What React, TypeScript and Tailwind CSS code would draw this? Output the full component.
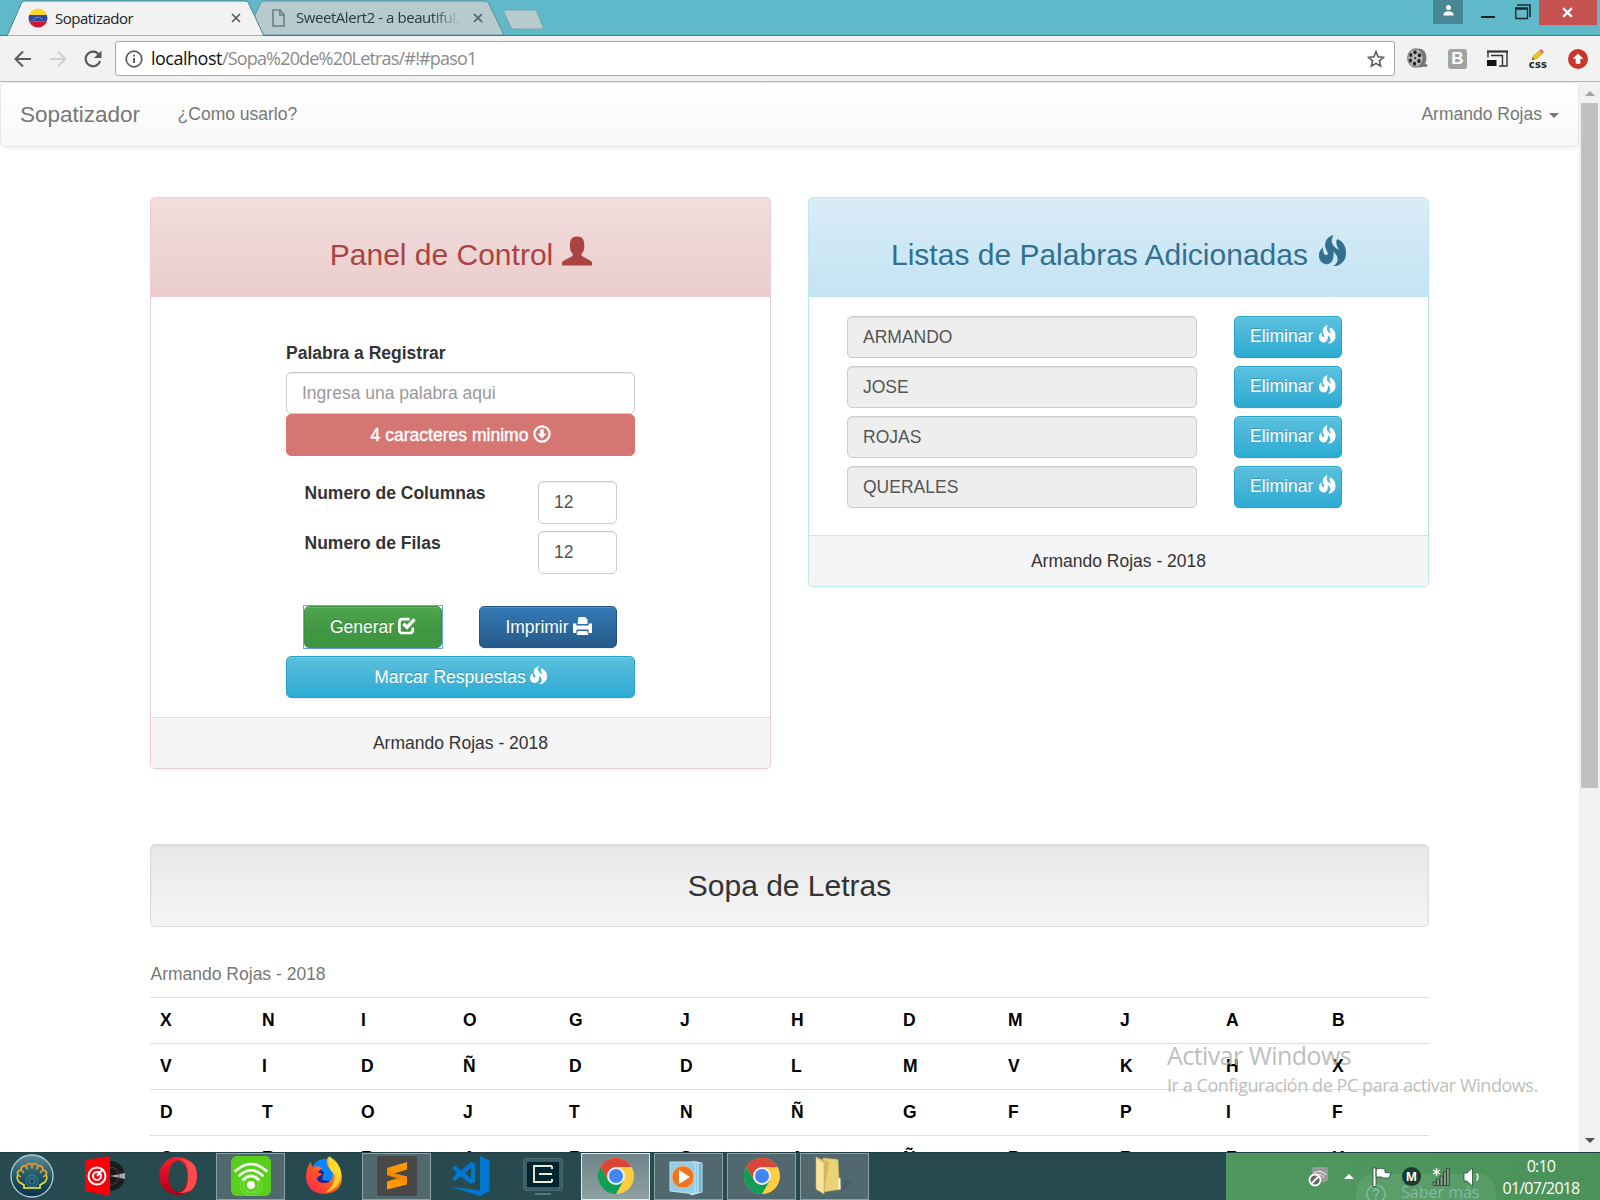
import React from "react";

const uiFont = "font-['Open_Sans','Noto_Sans',sans-serif]";

/* ---------- Glyphs used by the page ---------- */

function Fire({ className = "" }: { className?: string }) {
  return (
    <svg viewBox="93 -31 1046 1202" preserveAspectRatio="none" className={className} fill="currentColor">
      <path
        transform="translate(0 1200) scale(1 -1)"
        d="M653 1231q-39 -67 -54.500 -131t-10.500 -114.500t24.500 -96.500t47.500 -80t63.500 -62.500t68.500 -46.500t65 -30q-4 7 -17.500 35t-18.500 39.500t-17 39.500t-17 43t-13 42t-9.500 44.500t-2 42t4 43t13.500 39t23 38.500q96 -42 165 -107.500t105 -138t52 -156t13 -159t-19 -149.500q-13 -55 -44 -106.500t-68 -87t-78.500 -64.500t-72.500 -45t-53 -22q-72 -22 -127 -11q-31 6 -13 19q6 3 17 7q13 5 32.500 21t41 44t38.500 63.500t21.500 81.500t-6.500 94.500t-50 107t-104 115.500q10 -104 -0.500 -189t-37 -140.500t-65 -93t-84 -52t-93.500 -11t-95 24.500q-80 36 -131.500 114t-53.500 171q-2 23 0 49.500t4.500 52.500t13.500 56t27.500 60t46 64.500t69.500 68.500q-8 -53 -5 -102.500t17.500 -90t34 -68.500t44.500 -39t49 -2q31 13 38.500 36t-4.500 55t-29 64.500t-36 75t-26 75.500q-15 85 2 161.500t53.500 128.500t85.500 92.500t93.500 61t81.500 25.500z"
      />
    </svg>
  );
}

function User({ className = "" }: { className?: string }) {
  return (
    <svg viewBox="0 0 31 30" className={className} fill="currentColor">
      <path d="M0 30V26.700Q.3 25.500 3 24.300L10.500 20.300Q11.700 19.300 10.800 17.500C9 16 8.500 14 8.300 12C7.800 4 9.500 0 15.600 0S23.500 4 23 12C22.800 14 22 16 20.500 17.500Q19.500 19.300 21 20.300L28 24.300Q31 25.700 31 27V30Z" />
    </svg>
  );
}

function CircleDown() {
  return (
    <svg viewBox="0 0 18 18" className="-mt-[3px] h-[18px] w-[18px] shrink-0">
      <circle cx="9" cy="9" r="7.600" fill="none" stroke="currentColor" strokeWidth="2.200" />
      <path d="M7.200 4.200h3.600v4.600h2.500L9 13.800 4.700 8.800h2.500Z" fill="currentColor" />
    </svg>
  );
}

function CheckBox() {
  return (
    <svg viewBox="0 0 18 18" className="-mt-[3px] h-[18px] w-[18px] shrink-0" fill="none" stroke="currentColor">
      <path d="M11.500 2.200H4.500Q1.400 2.200 1.400 5.200V13.200Q1.400 16 4.500 16H11.800Q14.800 16 14.800 13.200V10.500" strokeWidth="2.700" />
      <path d="M5.500 6.700l3.500 3.600 7.500-8" strokeWidth="3.400" />
    </svg>
  );
}

function Printer() {
  return (
    <svg viewBox="0 0 19 18" className="-mt-[3px] h-[18px] w-[19px] shrink-0" fill="currentColor">
      <path d="M5.500 0h6.500l2.500 2.500V7h-10Z" />
      <path d="M0 6.500h3.300v2h12.400v-2H19v9.500h-3.500v-3.500h-12v3.500H0Z" />
      <path d="M5 14h9l1.500 4h-12Z" />
    </svg>
  );
}

/* ---------- Browser window ---------- */

function TabShape({ width, fill, stroke }: { width: number; fill: string; stroke: string }) {
  return (
    <svg className="absolute inset-0 h-full w-full" viewBox={`0 0 ${width} 36`} preserveAspectRatio="none">
      <path d={`M0 36L14.500 3Q15.500 1 18 1H${width - 19}Q${width - 16.500} 1 ${width - 15.500} 3L${width} 36Z`} fill={fill} stroke={stroke} />
    </svg>
  );
}

function Cross({ className = "" }: { className?: string }) {
  return (
    <svg viewBox="0 0 10 10" className={className} stroke="currentColor" fill="none">
      <path d="M1 1l8 8M9 1L1 9" strokeWidth="1.600" />
    </svg>
  );
}

function TitleBar() {
  return (
    <div className={`relative flex h-9 border-b border-[#3f7f8a] bg-[#5fb9c9] text-[15px] ${uiFont}`}>
      <div className="relative z-10 -mb-px ml-[7px] flex h-9 w-[257px] items-center pr-[23px] pl-[21px]">
        <TabShape width={257} fill="#f2f2f2" stroke="#44828d" />
        <svg viewBox="0 0 20 20" className="relative h-5 w-5 shrink-0">
          <clipPath id="flag"><circle cx="10" cy="10" r="9.500" /></clipPath>
          <g clipPath="url(#flag)">
            <rect width="20" height="7" fill="#fbd52a" />
            <rect y="7" width="20" height="6.500" fill="#2b4a9b" />
            <rect y="13.500" width="20" height="7" fill="#d3122c" />
            <path d="M5 12Q10 6.500 15 12" stroke="#c9d0e8" strokeWidth="1" strokeDasharray="1 1" fill="none" />
          </g>
        </svg>
        <span className="relative ml-[7px] tracking-[-0.5px] text-[#222]">Sopatizador</span>
        <Cross className="relative ml-auto h-[10px] w-[10px] text-[#555]" />
      </div>
      <div className="relative -ml-[18px] flex h-[35px] w-[258px] items-center pr-[21px] pl-[26px]">
        <TabShape width={258} fill="#b7cbce" stroke="#5a8f98" />
        <svg viewBox="0 0 13 18" className="relative h-[18px] w-[13px] shrink-0" fill="none" stroke="#6f7f82" strokeWidth="1.600">
          <path d="M1 1h7l4 4.500V17H1ZM7.800 1v5H12" />
        </svg>
        <span className="relative ml-[11px] w-[165px] overflow-hidden tracking-[-0.45px] whitespace-nowrap text-[#2b3a3d] [mask-image:linear-gradient(to_right,black_82%,transparent)]">
          SweetAlert2 - a beautiful,
        </span>
        <Cross className="relative ml-auto h-[10px] w-[10px] text-[#4d5c5f]" />
      </div>
      <svg viewBox="0 0 43 22" className="mt-[9px] -ml-[2px] h-[22px] w-[43px]">
        <path d="M3 1H32Q34 1 34.700 2.500L41 18Q41.500 20 39 20H12Q10 20 9 18.500L2 3Q1.300 1 3 1Z" fill="#b7cbce" stroke="#7aa5ad" />
      </svg>
      <div className="ml-auto flex items-start pr-[3px]">
        <div className="flex h-6 w-[30px] justify-center bg-[#478894] pt-[5px]">
          <svg viewBox="0 0 10 11" className="h-[11px] w-[11px]" fill="#fff">
            <circle cx="5" cy="2.500" r="2.500" />
            <path d="M0 10.500V9Q1 6.300 5 6.300T10 9V10.500Z" />
          </svg>
        </div>
        <div className="mt-4 ml-[18px] h-[2px] w-[14px] bg-[#222]" />
        <svg viewBox="0 0 16 16" className="mt-1 ml-5 h-4 w-4" fill="none" stroke="#1f2a2d">
          <path d="M2 1H15V13" strokeWidth="1.600" />
          <path d="M.8 5V14.500H12.500V5" strokeWidth="1.300" />
          <path d="M0 4.500H13" strokeWidth="2.500" />
        </svg>
        <div className="ml-[8px] flex h-[25px] w-[58px] items-center justify-center bg-[#c75050] pr-[2px] text-white">
          <svg viewBox="0 0 10 10" className="h-[11px] w-[11px]"><path d="M1 1l8 8M9 1L1 9" stroke="#fff" strokeWidth="2" /></svg>
        </div>
      </div>
    </div>
  );
}

function Toolbar() {
  return (
    <div className={`flex h-[46px] items-center border-b border-[#b6b4b6] bg-[#f2f2f2] ${uiFont}`}>
      <svg viewBox="0 0 18 18" className="ml-[14px] h-[18px] w-[18px]" fill="none" stroke="#5a5a5a" strokeWidth="2">
        <path d="M17 9H2M9 1.500L1.500 9L9 16.500" />
      </svg>
      <svg viewBox="0 0 18 18" className="ml-[17px] h-[18px] w-[18px]" fill="none" stroke="#d0d0d0" strokeWidth="2">
        <path d="M1 9H16M9 1.500L16.500 9L9 16.500" />
      </svg>
      <svg viewBox="0 0 18 18" className="ml-[17px] h-[18px] w-[18px]" fill="none" stroke="#5a5a5a" strokeWidth="2.200">
        <path d="M15 4.800A7.300 7.300 0 1 0 16 11" />
        <path d="M17.500 .5V8H10Z" fill="#5a5a5a" stroke="none" />
      </svg>
      <div className="ml-[13px] flex h-[35px] w-[1280px] items-center rounded-[3px] border border-[#a9a9a9] bg-white pr-[9px] pl-[9px]">
        <svg viewBox="0 0 18 18" className="h-[18px] w-[18px]" fill="none" stroke="#5a5a5a">
          <circle cx="9" cy="9" r="7.800" strokeWidth="1.700" />
          <path d="M9 8v5M9 4.800v1.800" strokeWidth="1.900" />
        </svg>
        <span className="ml-[8px] text-[18px] tracking-[-0.82px] whitespace-nowrap text-[#8a8a8a]">
          <span className="tracking-[-0.5px] text-[#111]">localhost</span>/Sopa%20de%20Letras/#!#paso1
        </span>
        <svg viewBox="0 0 18 18" className="ml-auto h-[18px] w-[18px]" fill="none" stroke="#5a5a5a" strokeWidth="1.600">
          <path d="M9 1.800l2.100 5 5.400.5-4.100 3.600 1.200 5.300L9 13.400l-4.600 2.800 1.200-5.300L1.500 7.300l5.400-.5Z" />
        </svg>
      </div>
      <svg viewBox="0 0 21 21" className="ml-[12px] h-[21px] w-[21px]">
        <ellipse cx="12.500" cy="10" rx="7" ry="9.500" fill="#777" />
        <ellipse cx="8.500" cy="10" rx="7.800" ry="9.300" fill="#b5b5b5" stroke="#555" strokeWidth=".8" />
        <g fill="#222">
          <ellipse cx="8" cy="4.200" rx="1.700" ry="2" /><ellipse cx="12.500" cy="7.200" rx="1.700" ry="2" />
          <ellipse cx="12" cy="13" rx="1.700" ry="2" /><ellipse cx="7.500" cy="15.700" rx="1.700" ry="2" />
          <ellipse cx="3.500" cy="12.500" rx="1.500" ry="2" /><ellipse cx="3.800" cy="7" rx="1.500" ry="2" />
          <circle cx="8.200" cy="10" r="1" />
        </g>
        <path d="M12 18.500Q17 15 20.500 16.500L20 19Z" fill="#777" />
      </svg>
      <div className="ml-[20px] flex h-5 w-[19px] items-center justify-center rounded-[3px] bg-[#a3a3a3] font-['Liberation_Sans',sans-serif] text-[17px] leading-none font-bold text-white">B</div>
      <svg viewBox="0 0 21 17" className="ml-[20px] h-[17px] w-[21px]" fill="none" stroke="#333">
        <path d="M0 1.500H21" strokeWidth="2.200" />
        <path d="M1 2v5.500M20 2v14H12M4 5.500h11.500V16" strokeWidth="1.400" />
        <path d="M0 10h9.500v6H0Z" fill="#111" stroke="none" />
      </svg>
      <div className="ml-[20px] flex w-5 flex-col items-center">
        <svg viewBox="0 0 12 11" className="h-[11px] w-[12px]">
          <path d="M0 11l1.200-4L7.500 1.500l3 3L4 10Z" fill="#f3c51c" stroke="#a37b00" strokeWidth=".5" />
          <path d="M7.500 1.500L9 0l3 2.800-1.500 1.700Z" fill="#e8657c" />
          <path d="M0 11l.7-2.200L2 10.300Z" fill="#222" />
        </svg>
        <span className="font-['DejaVu_Sans',sans-serif] text-[10px] leading-[9px] font-bold tracking-[0.2px] text-[#222]">css</span>
      </div>
      <svg viewBox="0 0 20 20" className="ml-[20px] h-5 w-5">
        <circle cx="10" cy="10" r="10" fill="#c9372c" />
        <path d="M10 4.500l5.300 5.300h-3v5H7.700v-5h-3Z" fill="#fff" />
      </svg>
    </div>
  );
}

/* ---------- Page ---------- */

function Navbar() {
  return (
    <nav className="flex h-[65px] items-center rounded-[5px] border border-[#e7e7e7] bg-linear-to-b from-white to-[#f8f8f8] pr-[19px] pl-[19px] text-[#777] shadow-[0_1px_6px_rgba(0,0,0,0.075)]">
      <span className="-mt-px text-[22.5px]">Sopatizador</span>
      <span className="ml-[37.500px]">¿Como usarlo?</span>
      <span className="ml-auto">Armando Rojas</span>
      <span className="mt-[2px] ml-[7px] h-0 w-0 border-x-5 border-t-5 border-x-transparent border-t-[#777]" />
    </nav>
  );
}

const buttonBase =
  "flex h-[42px] items-center justify-center gap-[4px] rounded-[5px] border text-white shadow-[inset_0_1px_0_rgba(255,255,255,0.15),0_1px_1px_rgba(0,0,0,0.075)] [text-shadow:0_-1px_0_rgba(0,0,0,0.2)]";
const infoButton = "border-[#28a4c9] bg-linear-to-b from-[#5bc0de] to-[#2aabd2]";
const inputBase = "rounded-[5px] border border-[#ccc] px-[15px] shadow-[inset_0_1px_1px_rgba(0,0,0,0.075)] outline-none";

function NumberRow({ label }: { label: string }) {
  return (
    <div className="flex h-[50px] items-start justify-between pr-[18px] pl-[18.500px]">
      <label className="font-bold">{label}</label>
      <input className={`${inputBase} h-[43px] w-[79px] text-[#555]`} defaultValue="12" />
    </div>
  );
}

function ControlPanel() {
  return (
    <section className="w-[621px] overflow-hidden rounded-[5px] border border-[#ebccd1] shadow-[0_1px_2px_rgba(0,0,0,0.05)]">
      <h3 className="flex h-[99px] items-center justify-center gap-[9px] bg-linear-to-b from-[#f2dede] to-[#ebcccc] pt-[14px] pl-px text-[30px] leading-none text-[#a94442]">
        Panel de Control
        <User className="-mt-[8px] h-[30px] w-[30px]" />
      </h3>
      <div className="mx-auto flex h-[420px] w-[349px] flex-col pt-[44px]">
        <label className="mb-[6px] font-bold">Palabra a Registrar</label>
        <input className={`${inputBase} h-[42px] shrink-0 placeholder:text-[#999]`} placeholder="Ingresa una palabra aqui" />
        <div className="flex h-[42px] shrink-0 items-center justify-center gap-[5px] rounded-[5px] border border-[#dd7572] bg-[#d67673] pl-px tracking-[0.02px] text-white [-webkit-text-stroke:0.4px_white]">
          4 caracteres minimo
          <CircleDown />
        </div>
        <div className="mt-[25px]">
          <NumberRow label="Numero de Columnas" />
          <NumberRow label="Numero de Filas" />
        </div>
        <div className="mt-[25px] flex justify-between px-[18px]">
          <div className="-m-px border border-[#6ea6f0]">
            <button className={`${buttonBase} w-[138px] border-[#3e8f3e] bg-linear-to-b from-[#4ea64e] to-[#419641] to-60%`}>
              Generar <CheckBox />
            </button>
          </div>
          <button className={`${buttonBase} w-[138px] border-[#245580] bg-linear-to-b from-[#337ab7] to-[#265a88] pl-px`}>
            Imprimir <Printer />
          </button>
        </div>
        <button className={`${buttonBase} ${infoButton} mt-2`}>
          Marcar Respuestas <Fire className="-mt-[4px] h-[18px] w-[17px]" />
        </button>
      </div>
      <footer className="flex h-[51px] items-center justify-center border-t border-[#ddd] bg-[#f5f5f5]">Armando Rojas - 2018</footer>
    </section>
  );
}

const words = ["ARMANDO", "JOSE", "ROJAS", "QUERALES"];

function WordsPanel() {
  return (
    <section className="w-[621px] self-start overflow-hidden rounded-[5px] border border-[#bce8f1] shadow-[0_1px_2px_rgba(0,0,0,0.05)]">
      <h3 className="flex h-[99px] items-center justify-center gap-[11px] bg-linear-to-b from-[#d9edf7] to-[#c4e3f3] pt-[14px] text-[30px] leading-none text-[#31708f]">
        Listas de Palabras Adicionadas
        <Fire className="-mt-[9px] h-[31px] w-[27px]" />
      </h3>
      <div className="flex h-[238px] flex-col gap-2 pt-[19px] pl-[38px]">
        {words.map((word) => (
          <div key={word} className="flex">
            <input className={`${inputBase} h-[42px] w-[350px] bg-[#eee] text-[#555]`} defaultValue={word} readOnly />
            <button className={`${buttonBase} ${infoButton} ml-[37px] w-[108px] !justify-start !gap-[5px] pb-[2px] pl-[15px]`}>
              Eliminar <Fire className="-mt-[3px] ml-px h-[18.500px] w-[16.500px] shrink-0" />
            </button>
          </div>
        ))}
      </div>
      <footer className="flex h-[51px] items-center justify-center border-t border-[#ddd] bg-[#f5f5f5]">Armando Rojas - 2018</footer>
    </section>
  );
}

const rows = ["XNIOGJHDMJAB", "VIDÑDDLMVKHX", "DTOJTNÑGFPIF", "CRRARSAÑPRFK"];

function LetterGrid() {
  return (
    <div className="mt-[35px]">
      <p className="pb-[10px] pl-[0.500px] text-[#777]">Armando Rojas - 2018</p>
      {rows.map((row) => (
        <div
          key={row}
          className="grid h-[46px] grid-cols-[102px_99px_102px_106px_111px_111px_112px_105px_112px_106px_106px_107px] items-start border-t border-[#ddd] pt-[10px] font-bold text-black"
        >
          {row.split("").map((letter, i) => (
            <span key={i} className="pl-[10px]">{letter}</span>
          ))}
        </div>
      ))}
    </div>
  );
}

function Scrollbar() {
  return (
    <div className="flex w-[21px] flex-col items-center bg-[#f1f1f1] pt-[9px] pb-[9px]">
      <span className="border-x-5 border-b-5 border-x-transparent border-b-[#a3a3a3]" />
      <span className="mt-[7px] h-[685px] w-[17px] bg-[#c1c1c1]" />
      <span className="mt-auto border-x-5 border-t-5 border-x-transparent border-t-[#505050]" />
    </div>
  );
}

function Page() {
  return (
    <div className="flex h-[1070px] overflow-hidden font-['Liberation_Sans',Arial,sans-serif] text-[17.5px] leading-[25px] text-[#333]">
      <main className="w-[1579px] overflow-hidden bg-white">
        <Navbar />
        <div className="w-[1429px] pl-[150px]">
          <div className="mt-[50px] flex justify-between">
            <ControlPanel />
            <WordsPanel />
          </div>
          <div className="mt-[75px] flex h-[83px] items-center justify-center rounded-[5px] border border-[#dcdcdc] bg-linear-to-b from-[#e8e8e8] to-[#f5f5f5] text-[30px] leading-none shadow-[inset_0_1px_3px_rgba(0,0,0,0.05),0_1px_0_rgba(255,255,255,0.1)]">
            Sopa de Letras
          </div>
          <LetterGrid />
        </div>
      </main>
      <Scrollbar />
    </div>
  );
}

/* ---------- Taskbar ---------- */

const icon = "h-10 w-10";

function Shell() {
  return (
    <svg viewBox="0 0 44 44" className="ml-px h-11 w-11">
      <defs>
        <linearGradient id="orb" x2="0" y2="1"><stop stopColor="#5d8c96" /><stop offset=".5" stopColor="#1f5866" /><stop offset="1" stopColor="#0d2f50" /></linearGradient>
        <linearGradient id="shell" x2="0" y2="1"><stop stopColor="#f08a24" /><stop offset="1" stopColor="#f5ee3a" /></linearGradient>
      </defs>
      <circle cx="22" cy="22" r="21" fill="url(#orb)" stroke="#b9cdd2" strokeWidth="1.300" />
      <g fill="none" stroke="#4aa3b5" strokeWidth="1.500" opacity=".5"><circle cx="22" cy="27" r="3" /><circle cx="22" cy="27" r="6" /></g>
      <path d="M14 34V31L9 28Q6 24 8 21Q6 17 11 16Q11 11 16 12Q18 8 22 10.500Q26 8 28 12Q33 11 33 16Q38 17 36 21Q38 24 35 28L30 31V34Z" fill="none" stroke="url(#shell)" strokeWidth="1.700" />
      <path d="M8 21l3 2M11 16l3 3M16 12l1.500 3.500M22 10.500v4M28 12l-1.500 3.500M33 16l-3 3M36 21l-3 2" stroke="#f0a42c" strokeWidth="1.300" />
    </svg>
  );
}

function Music() {
  return (
    <svg viewBox="0 0 40 40" className={icon}>
      <circle cx="25" cy="20" r="15" fill="#1c1c1c" />
      <path d="M25 20l15-3v6Z" fill="#aaa" /><circle cx="25" cy="20" r="9" fill="none" stroke="#444" />
      <path d="M0 4L25 0V40L0 35Z" fill="#fb0007" />
      <g fill="none" stroke="#fff" strokeWidth="2"><circle cx="12" cy="20" r="8.500" /><circle cx="12" cy="20" r="4" /><path d="M12 20L18 13" /></g>
    </svg>
  );
}

function Opera() {
  return (
    <svg viewBox="0 0 40 40" className={icon}>
      <defs><linearGradient id="op" x2="0" y2="1"><stop stopColor="#ff1b2d" /><stop offset="1" stopColor="#a70014" /></linearGradient></defs>
      <circle cx="20" cy="20" r="19" fill="url(#op)" />
      <path d="M20 3Q30 4 30 20T20 37Q39 38 39 20T20 3Z" fill="#ff4b4b" />
      <ellipse cx="20" cy="20" rx="9.500" ry="15.500" fill="#264a50" />
    </svg>
  );
}

function Wifi() {
  return (
    <svg viewBox="0 0 40 40" className={icon}>
      <rect width="40" height="40" rx="6" fill="#58d01b" />
      <g fill="none" stroke="#7de04d" strokeWidth="1.200"><circle cx="20" cy="29" r="7.500" /><circle cx="20" cy="29" r="10.800" opacity=".7" /></g>
      <circle cx="20" cy="29" r="4" fill="#fff" />
      <path d="M4.500 15Q20 1 35.500 15M8.500 19.500Q20 9 31.500 19.500M12.500 23.500Q20 16.500 27.500 23.500" fill="none" stroke="#fff" strokeWidth="2.600" strokeLinecap="round" />
    </svg>
  );
}

function Firefox() {
  return (
    <svg viewBox="0 0 40 40" className={icon}>
      <defs><linearGradient id="fx" x1="0" y1="1" x2="1" y2="0"><stop stopColor="#ff1e5c" /><stop offset=".45" stopColor="#ff5722" /><stop offset="1" stopColor="#ffde2e" /></linearGradient></defs>
      <circle cx="21" cy="17" r="14" fill="#0a84ff" />
      <path d="M14 12l6 4-2 8 8 1-3 7-10-2Z" fill="#2a1f8f" />
      <path d="M24 1Q38 8 38 22Q37 37 20 38Q3 37 2 21Q2 11 7 6L8 11Q13 9 18 12L14 16Q16 18 19 18L12 22Q14 27 20 27Q29 27 29 18Q29 15 25 12Q21 7 24 1Z" fill="url(#fx)" />
      <path d="M25 0Q37 7 37 18Q36 33 21 37Q32 28 31 19Q22 12 25 0Z" fill="#ffe32e" opacity=".85" />
    </svg>
  );
}

function Sublime() {
  return (
    <svg viewBox="0 0 40 40" className={icon}>
      <rect width="40" height="40" rx="2.500" fill="#484848" />
      <path d="M10 12L30 6v7.500L17 17.500 30 20.500v8L10 33.500V25.500l12.500-3.800L10 19Z" fill="#ff9800" />
      <path d="M10 12v7l20 9v-7.500L17 17.500Z" fill="#f08200" opacity=".6" />
    </svg>
  );
}

function Code() {
  return (
    <svg viewBox="0 0 40 40" className={icon}>
      <path d="M30 0l9.500 4.500V35L30 40 0 30.500l30 4Z" fill="#0078cf" />
      <path d="M21 6l4 2V26l-4 2L10.500 20.500 5 25 2 23.500 6.500 17 2 11.500 5 9.500l6 5Zm0 6l-6 5 6 5.500Z" fill="#0078cf" fillRule="evenodd" />
    </svg>
  );
}

function Monitor() {
  return (
    <svg viewBox="0 0 40 40" className={icon}>
      <rect x="1" y="3" width="38" height="31" rx="1" fill="#0c2f3a" stroke="#6d878c" strokeWidth="1" />
      <rect x="3" y="5" width="34" height="27" fill="#01252f" stroke="#94a8ab" strokeWidth=".8" />
      <path d="M29 10H11v16H29M16 18H29M29 10v3M29 26v-3" fill="none" stroke="#eceadb" strokeWidth="1.900" />
      <path d="M12 38h16" stroke="#6d878c" strokeWidth="1.500" />
    </svg>
  );
}

function Chrome() {
  return (
    <svg viewBox="0 0 40 40" className={icon}>
      <circle cx="20" cy="20" r="18" fill="#ffcd40" />
      <path d="M20 11H35.600A18 18 0 0 0 4.400 11L12.200 24.500Z" fill="#db4437" />
      <path d="M4.400 11A18 18 0 0 0 20 38L27.800 24.500L12.200 24.500Z" fill="#0f9d58" />
      <circle cx="20" cy="20" r="9" fill="#f1f1f1" />
      <circle cx="20" cy="20" r="7" fill="#4285f4" />
    </svg>
  );
}

function MediaPlayer() {
  return (
    <svg viewBox="0 0 40 40" className={icon}>
      <path d="M24 6l9 1V36l-9 2Z" fill="#6fb5d8" stroke="#bfe3f2" />
      <path d="M22 6l7 0V37l-7 2Z" fill="#8fcbe4" stroke="#d4edf7" />
      <path d="M1 6H26V38L1 35Z" fill="#93cce6" stroke="#bfe3f2" />
      <circle cx="14" cy="21" r="11" fill="#ee7420" stroke="#ffc48a" strokeWidth=".7" />
      <path d="M10 14v14l11-7Z" fill="#fff" />
    </svg>
  );
}

function Folder() {
  return (
    <svg viewBox="0 0 40 40" className={icon}>
      <path d="M26 34l13-8-9-2Z" fill="#3d575b" opacity=".5" />
      <path d="M8 2L23 3.500l1 19 1.500 11-8 1L8 36Z" fill="#ead27b" stroke="#c9ab4f" strokeWidth=".6" />
      <path d="M1 1l13 5V7L9 38 1 33Z" fill="#d8b955" />
      <path d="M1 1l8 6v31L1 33Z" fill="#f5e5a0" stroke="#cdb158" strokeWidth=".6" />
      <path d="M23.500 22h2v11h-2Z" fill="#fbf6dc" />
    </svg>
  );
}

const apps = [
  { key: "start", node: <Shell />, state: "none" },
  { key: "music", node: <Music />, state: "none" },
  { key: "opera", node: <Opera />, state: "none" },
  { key: "wifi", node: <Wifi />, state: "open" },
  { key: "firefox", node: <Firefox />, state: "none" },
  { key: "sublime", node: <Sublime />, state: "open" },
  { key: "code", node: <Code />, state: "none" },
  { key: "monitor", node: <Monitor />, state: "none" },
  { key: "chrome", node: <Chrome />, state: "active" },
  { key: "media", node: <MediaPlayer />, state: "open" },
  { key: "chrome2", node: <Chrome />, state: "open" },
  { key: "folder", node: <Folder />, state: "open" },
];

const stateClass: Record<string, string> = {
  none: "border-transparent",
  open: "border-[#8da2a5] bg-[#51696e]",
  active: "border-[#e6ecec] bg-linear-to-b from-[#6f8589] to-[#8fa0a3]",
};

function Tray() {
  return (
    <div className={`relative flex w-[374px] items-center overflow-hidden bg-linear-to-r from-[#4f9961] to-[#4a9259] text-[16px] text-white ${uiFont}`}>
      <div className="absolute top-[21px] left-[130px] flex h-10 w-[140px] items-start gap-[15px] rounded-[18px] bg-white/8 pt-[7px] pl-[10px] text-[#84b9a8]">
        <svg viewBox="0 0 20 20" className="mt-[3px] h-5 w-5 shrink-0" fill="none" stroke="currentColor" strokeWidth="1.500"><circle cx="10" cy="10" r="9" /><path d="M7.500 8Q7.500 5 10 5T12.500 7.500Q12.500 9 10 11V13M10 14.500V16" /></svg>
        <span className="text-[16px] leading-[22px] whitespace-nowrap">Saber más</span>
      </div>
      <div className="relative flex h-5 w-full items-center">
        <svg viewBox="0 0 20 20" className="ml-[82px] h-5 w-5">
          <rect x="4" y="0" width="16" height="15" rx="3" fill="#999" />
          <path d="M6 6Q13 2 18 8M8 9Q13 5 16 11" stroke="#ddd" fill="none" strokeWidth="1.200" />
          <circle cx="7" cy="13" r="5.500" fill="#666" stroke="#fff" strokeWidth="1.800" /><path d="M3.500 16.500l7-7" stroke="#fff" strokeWidth="1.800" />
        </svg>
        <span className="ml-[16px] border-x-5 border-b-5 border-x-transparent border-b-white" />
        <svg viewBox="0 0 20 20" className="ml-[18px] h-5 w-5" fill="#fff" stroke="#2b4d33" strokeWidth=".8">
          <path d="M1 1h3v18.500H1ZM4 2Q8 .5 13 2V5.500L19 6l-2 5H10V10H4Z" />
        </svg>
        <span className="ml-[10px] flex h-[19px] w-[19px] items-center justify-center rounded-full bg-[#1d3b2a] text-[12px] leading-none font-bold">M</span>
        <svg viewBox="0 0 18 19" className="ml-[11px] h-[19px] w-[18px]" fill="#8b9a8d" stroke="#21412c" strokeWidth=".8">
          <path d="M1 15h3v3.500H1ZM4.500 12h3v6.500h-3ZM8 9h3v9.500H8ZM11.500 5h3v13.500h-3ZM14.500 1.500h2.800v17h-2.800Z" />
          <path d="M4.500 1v8M1 3l7 4M8 3L1 7" stroke="#fff" strokeWidth="1.300" />
        </svg>
        <svg viewBox="0 0 18 20" className="ml-[13px] h-5 w-[18px]" fill="none">
          <path d="M1 6h3L9.500 .8V19.200L4 14H1Z" fill="#fff" stroke="#2b4d33" strokeWidth=".8" />
          <path d="M13.500 6.500Q16.500 10 13.500 13.500" stroke="#e8f3ea" strokeWidth="1.400" />
        </svg>
      </div>
      <div className="relative mr-[20px] flex w-[78px] shrink-0 flex-col items-center leading-[22px] tracking-[-0.8px] whitespace-nowrap">
        <span>0:10</span>
        <span>01/07/2018</span>
      </div>
    </div>
  );
}

function Taskbar() {
  return (
    <div className="flex h-12 justify-between border-t border-[#1f3f45] bg-[#264a50]">
      <div className="-ml-[3px] flex gap-1">
        {apps.map((app) => (
          <div key={app.key} className={`flex h-[47px] w-[69px] items-center justify-center border pb-[2px] ${stateClass[app.state]}`}>
            {app.node}
          </div>
        ))}
      </div>
      <Tray />
    </div>
  );
}

export default function App() {
  return (
    <div className="relative flex h-[1200px] w-[1600px] flex-col overflow-hidden bg-white">
      <TitleBar />
      <Toolbar />
      <Page />
      <Taskbar />
      <div className={`pointer-events-none absolute top-[1038px] left-[1167px] whitespace-nowrap text-[#b5b5b5]/90 ${uiFont}`}>
        <p className="text-[25px] leading-[34px] tracking-[-0.55px]">Activar Windows</p>
        <p className="text-[18px] leading-[26px] tracking-[-0.44px]">Ir a Configuración de PC para activar Windows.</p>
      </div>
    </div>
  );
}
